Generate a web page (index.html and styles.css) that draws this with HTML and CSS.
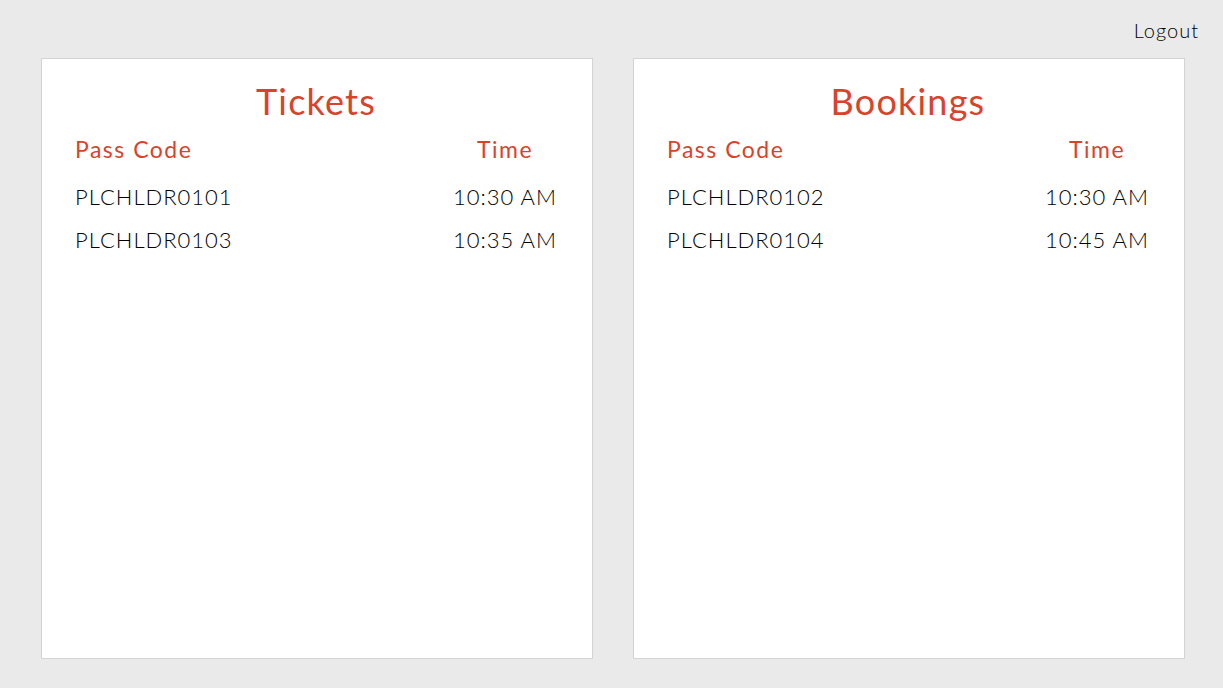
FILE: index.html
```html
<!DOCTYPE html>
<html lang="en">
<head>
<meta charset="utf-8">
<title>Dashboard</title>
<link rel="stylesheet" href="styles.css">
</head>
<body>
<header class="topbar">
  <a class="logout" href="#">Logout</a>
</header>
<main class="panels">
  <section class="panel">
    <h2 class="panel-title">Tickets</h2>
    <table class="pass-table">
      <thead>
        <tr><th class="col-code">Pass Code</th><th class="col-time">Time</th></tr>
      </thead>
      <tbody>
        <tr><td class="col-code">PLCHLDR0101</td><td class="col-time">10:30 AM</td></tr>
        <tr><td class="col-code">PLCHLDR0103</td><td class="col-time">10:35 AM</td></tr>
      </tbody>
    </table>
  </section>
  <section class="panel">
    <h2 class="panel-title">Bookings</h2>
    <table class="pass-table">
      <thead>
        <tr><th class="col-code">Pass Code</th><th class="col-time">Time</th></tr>
      </thead>
      <tbody>
        <tr><td class="col-code">PLCHLDR0102</td><td class="col-time">10:30 AM</td></tr>
        <tr><td class="col-code">PLCHLDR0104</td><td class="col-time">10:45 AM</td></tr>
      </tbody>
    </table>
  </section>
</main>
</body>
</html>
```
FILE: styles.css
```css
* { box-sizing: border-box; }
html, body {
  margin: 0;
  height: 100%;
}
body {
  background: #eaeaea;
  font-family: "Lato", "Open Sans", sans-serif;
  color: #000;
}
.topbar {
  height: 58px;
  display: flex;
  justify-content: flex-end;
  align-items: flex-start;
  padding: 18px 24px 0 0;
}
.logout {
  color: #000;
  text-decoration: none;
  font-size: 20px;
  line-height: 24px;
  font-weight: 300;
  letter-spacing: 1px;
}
.panels {
  display: flex;
  gap: 40px;
  padding: 0 38px 0 41px;
}
.panel {
  flex: 1;
  height: 601px;
  background: #fff;
  border: 1px solid #d4d4d4;
  padding: 20px 35px 0 33px;
}
.panel-title {
  margin: 0;
  text-align: center;
  color: #d9432b;
  font-weight: 400;
  font-size: 36px;
  line-height: 44px;
  letter-spacing: 1.2px;
}
.pass-table {
  width: 100%;
  border-collapse: collapse;
  margin-top: 4px;
}
.pass-table th,
.pass-table td {
  padding: 0;
  font-size: 22px;
  font-weight: 300;
  height: 43px;
  letter-spacing: 1px;
  white-space: nowrap;
  color: #000;
}
.pass-table th {
  color: #d9432b;
  font-size: 23px;
  font-weight: 400;
  letter-spacing: 1.5px;
  height: 48px;
  vertical-align: top;
  padding-top: 8px;
}
.col-code { text-align: left; }
.col-time { text-align: center; width: 100px; }
```
